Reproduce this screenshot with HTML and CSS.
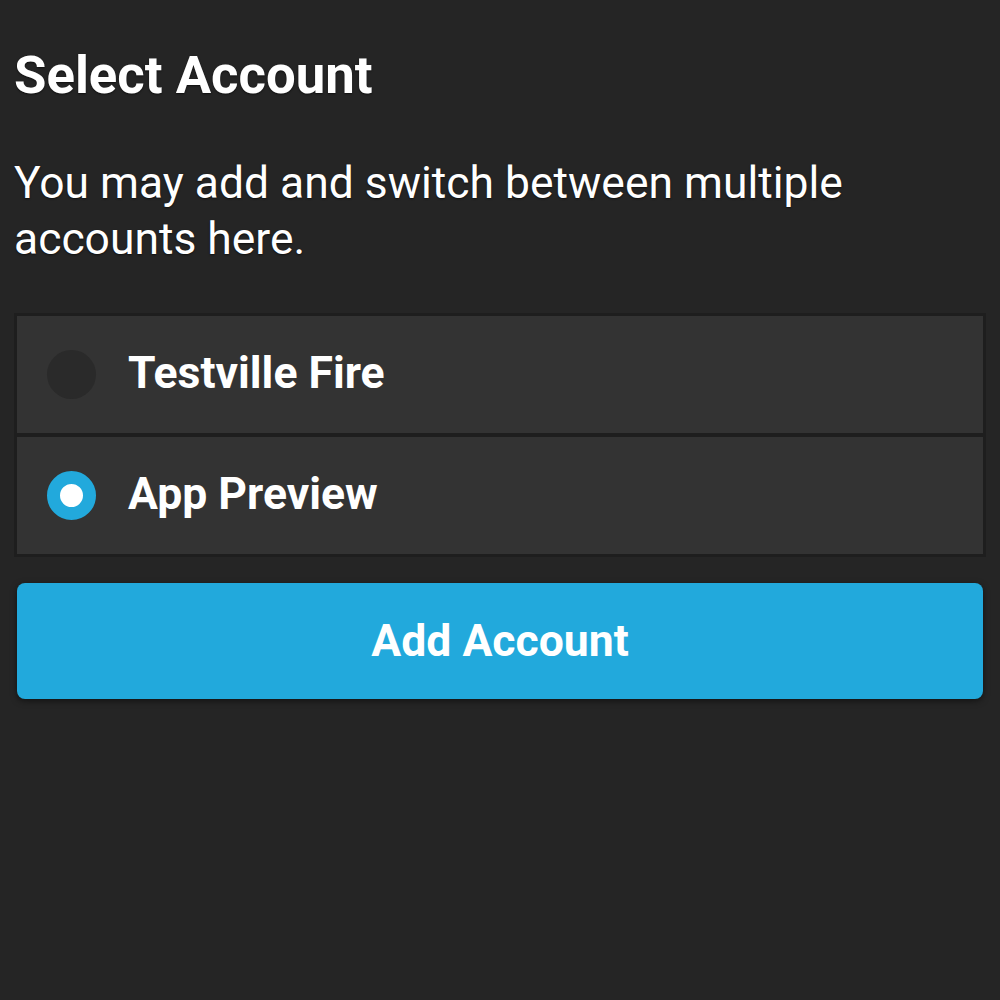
FILE: index.html
```html
<!DOCTYPE html>
<html>
<head>
<meta charset="utf-8">
<link rel="stylesheet" href="styles.css">
</head>
<body>
<div class="page">
  <h1 class="title">Select Account</h1>
  <p class="desc">You may add and switch between multiple accounts here.</p>
  <div class="list">
    <div class="row">
      <span class="radio"></span>
      <span class="name">Testville Fire</span>
    </div>
    <div class="row">
      <span class="radio selected"></span>
      <span class="name">App Preview</span>
    </div>
  </div>
  <div class="button">Add Account</div>
</div>
</body>
</html>
```
FILE: styles.css
```css
html, body {
  margin: 0;
  padding: 0;
  background: #252525;
  height: 100%;
}
.page {
  font-family: Roboto, "Liberation Sans", sans-serif;
  color: #fff;
  padding: 0 14px;
}
.title {
  margin: 0;
  padding-top: 45px;
  font-size: 52.7px;
  font-weight: 700;
  line-height: 60px;
  text-shadow: 0 1px 2px rgba(0,0,0,0.6);
}
.desc {
  margin: 0;
  padding-top: 50px;
  font-size: 44.4px;
  line-height: 56px;
  font-weight: 400;
  width: 900px;
  text-shadow: 0 1px 2px rgba(0,0,0,0.6);
}
.list {
  margin-top: 46px;
  border: 3px solid #1e1e1e;
  background: #1e1e1e;
  display: flex;
  flex-direction: column;
  gap: 4px;
}
.row {
  background: #333333;
  height: 117px;
  display: flex;
  align-items: center;
  padding-left: 30px;
}
.radio {
  width: 49px;
  height: 49px;
  border-radius: 50%;
  background: #2a2a2a;
  flex: none;
  box-sizing: border-box;
}
.radio.selected {
  background: #fff;
  border: 13px solid #22a9dc;
}
.name {
  margin-left: 32px;
  font-size: 44.5px;
  font-weight: 700;
  position: relative;
  top: -2px;
}
.button {
  margin: 26px 3px 0;
  height: 116px;
  background: #22a9dc;
  border-radius: 8px;
  box-shadow: 0 2px 6px rgba(0,0,0,0.5);
  display: flex;
  align-items: center;
  justify-content: center;
  font-size: 44.5px;
  font-weight: 700;
}
```
